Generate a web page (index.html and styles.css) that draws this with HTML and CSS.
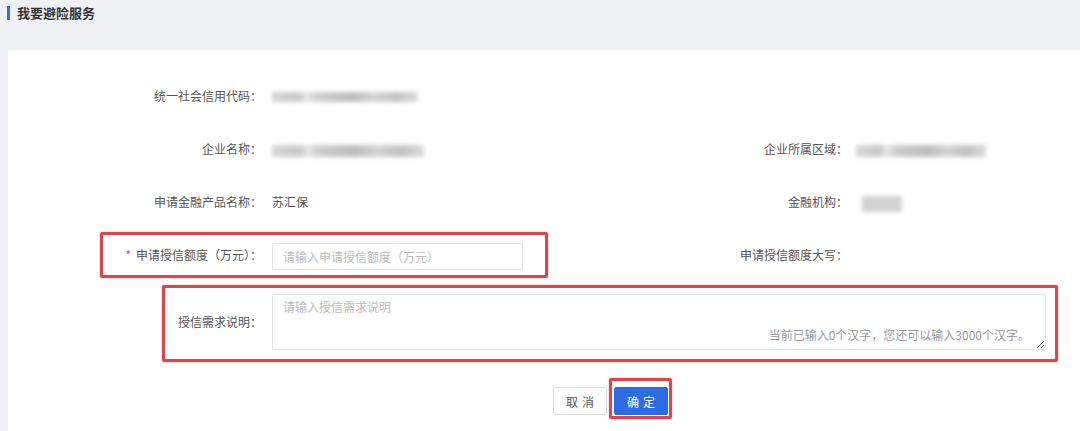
FILE: index.html
```html
<!DOCTYPE html>
<html>
<head>
    <meta charset="utf-8">
    <title>我要避险服务</title>
    <link rel="stylesheet" href="styles.css">
</head>
<body>
    <div class="hd">
        <h3>我要避险服务</h3>
    </div>

    <div class="card">
        <form class="fm">
            <label class="lb">统一社会信用代码：</label>
            <div class="val"><span class="mask mask-code"></span></div>
            <div></div>
            <div></div>

            <label class="lb">企业名称：</label>
            <div class="val"><span class="mask mask-name"></span></div>
            <label class="lb">企业所属区域：</label>
            <div class="val"><span class="mask mask-area"></span></div>

            <label class="lb">申请金融产品名称：</label>
            <div class="val">苏汇保</div>
            <label class="lb">金融机构：</label>
            <div class="val"><span class="mask mask-org"></span></div>

            <label class="lb"><i class="req">*</i>申请授信额度（万元）：</label>
            <div class="val"><input class="ipt" type="text" placeholder="请输入申请授信额度（万元）"></div>
            <label class="lb">申请授信额度大写：</label>
            <div class="val"></div>

            <label class="lb">授信需求说明：</label>
            <div class="area">
                <textarea placeholder="请输入授信需求说明"></textarea>
                <span class="count">当前已输入0个汉字，您还可以输入3000个汉字。</span>
            </div>
        </form>

        <div class="btns">
            <button type="button" class="btn">取消</button>
            <button type="button" class="btn btn-primary">确定</button>
        </div>

        <!-- 标注框 -->
        <div class="mark mark-amount"></div>
        <div class="mark mark-desc"></div>
        <div class="mark mark-ok"></div>
    </div>
</body>
</html>
```

FILE: styles.css
```css
html, body {
    margin: 0;
    padding: 0;
    height: 431px;
    overflow: hidden;
}

body {
    background: #f0f1f5;
    font-family: "Noto Sans CJK SC", "Noto Sans", sans-serif;
    font-size: 12px;
    color: #555;
}

.hd {
    height: 50px;
    box-sizing: border-box;
    padding: 6px 0 0 7px;
}

h3 {
    margin: 0;
    padding-left: 7px;
    border-left: 3px solid #3b6fd6;
    font-size: 13px;
    line-height: 14px;
    height: 14px;
    color: #333;
}

.card {
    position: relative;
    background: #fff;
    margin-left: 8px;
    height: 381px;
    padding-top: 32px;
    box-sizing: border-box;
}

.fm {
    display: grid;
    grid-template-columns: 254px 312px 254px 1fr;
    grid-template-rows: 28px 28px 28px 28px 56px;
    column-gap: 10px;
    row-gap: 25px;
    align-items: center;
}

.lb {
    text-align: right;
    color: #555;
    line-height: 28px;
    white-space: nowrap;
}

.req {
    font-style: normal;
    color: #e04b4b;
    margin-right: 5px;
}

.val {
    line-height: 28px;
    color: #555;
}

/* 脱敏后的模糊值 */
.mask {
    display: inline-block;
    vertical-align: middle;
    height: 10px;
    filter: blur(2px);
    background: linear-gradient(90deg, #d6d6d6 0, #c9c9c9 18%, #e8e8e8 24%, #cfcfcf 30%, #bdbdbd 55%, #d4d4d4 70%, #c2c2c2 85%, #dcdcdc 100%);
}

.mask-code { width: 146px; margin-top: -2px; }
.mask-name { width: 152px; height: 12px; }
.mask-area { width: 130px; height: 12px; margin-left: -2px; }
.mask-org { width: 40px; height: 16px; margin-left: 4px; background: #d2d2d2; }

.ipt {
    width: 251px;
    height: 27px;
    box-sizing: border-box;
    border: 1px solid #e4e4e4;
    border-radius: 2px;
    padding: 0 10px;
    font-family: inherit;
    font-size: 12px;
    color: #555;
    outline: none;
    vertical-align: middle;
}

.ipt::placeholder,
textarea::placeholder {
    color: #bbb;
}

.area {
    grid-column: 2 / 5;
    position: relative;
    width: 774px;
    height: 56px;
}

textarea {
    display: block;
    width: 774px;
    height: 56px;
    box-sizing: border-box;
    border: 1px solid #e4e4e4;
    border-radius: 2px;
    padding: 3px 10px;
    font-family: inherit;
    font-size: 12px;
    color: #555;
    outline: none;
    resize: vertical;
}

.count {
    position: absolute;
    right: 16px;
    bottom: 8px;
    color: #999;
    font-size: 12px;
    line-height: 14px;
}

.btns {
    display: flex;
    gap: 7px;
    padding-left: 545px;
    margin-top: 37px;
}

.btn {
    width: 54px;
    height: 28px;
    border: 1px solid #ddd;
    border-radius: 2px;
    background: #fff;
    color: #555;
    font-family: inherit;
    font-size: 12px;
    letter-spacing: 4px;
    text-indent: 4px;
    padding: 0;
}

.btn-primary {
    background: #2d6be4;
    border-color: #2d6be4;
    color: #fff;
}

.mark {
    position: absolute;
    border: 3px solid #d9464b;
    border-radius: 2px;
    box-shadow: 0 0 2px rgba(217, 70, 75, 0.5);
    box-sizing: border-box;
}

.mark-amount { left: 92px; top: 182px; width: 448px; height: 46px; }
.mark-desc { left: 154px; top: 235px; width: 896px; height: 77px; }
.mark-ok { left: 601px; top: 328px; width: 63px; height: 41px; }
```
